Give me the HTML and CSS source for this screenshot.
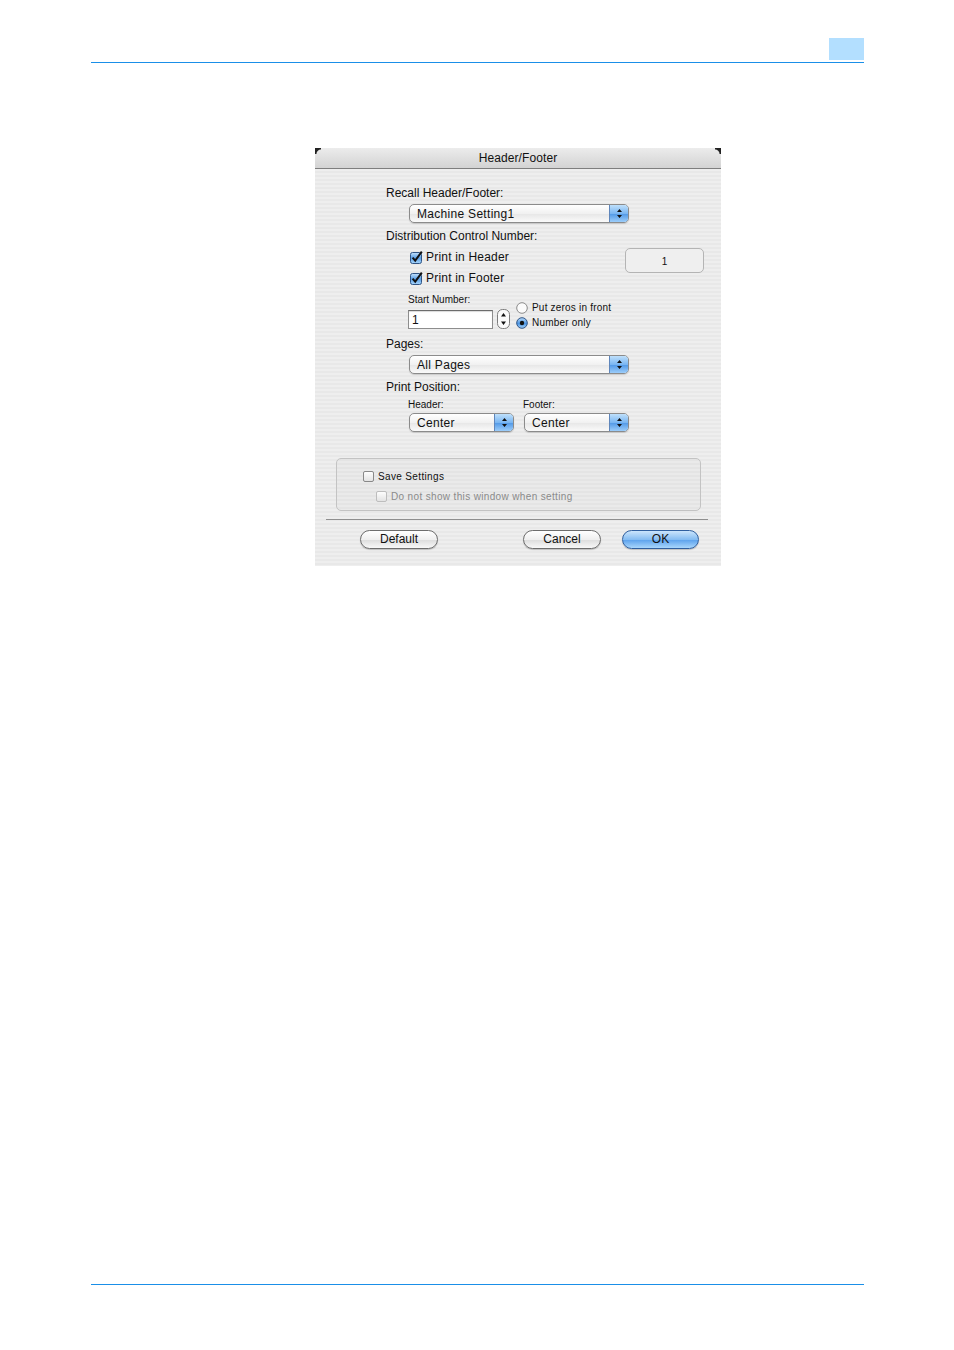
FILE: index.html
```html
<!DOCTYPE html>
<html lang="en">
<head>
    <meta charset="UTF-8">
    <meta name="viewport" content="width=device-width, initial-scale=1.0">
    <title>Header/Footer</title>
    <link rel="stylesheet" href="styles.css">
</head>
<body>
    <div class="page-top">
        <div class="tab-mark"></div>
    </div>

    <div class="dialog">
        <div class="title-bar">Header/Footer</div>

        <div class="dialog-body">
            <div class="form">
                <div class="label">Recall Header/Footer:</div>
                <div class="popup wide first">
                    <span class="popup-text">Machine Setting1</span>
                    <span class="popup-arrows">
                        <svg width="7" height="11" viewBox="0 0 7 11"><path d="M3.5 1 L6 4 L1 4 Z M1 7 L6 7 L3.5 10 Z" fill="#111"/></svg>
                    </span>
                </div>

                <div class="label">Distribution Control Number:</div>
                <div class="dist-row">
                    <div class="checks">
                        <div class="check-row">
                            <svg class="checkbox" width="13" height="13" viewBox="0 0 13 13"><defs><linearGradient id="cb1" x1="0" y1="0" x2="0" y2="1"><stop offset="0" stop-color="#c6e2fb"/><stop offset="0.5" stop-color="#5a9fe6"/><stop offset="1" stop-color="#a9d6fc"/></linearGradient></defs><rect x="0.5" y="1.5" width="11" height="11" rx="2" fill="url(#cb1)" stroke="#2f5485"/><path d="M2.6 6.6 L5.2 9.6 L11.8 0.6" fill="none" stroke="#111" stroke-width="2"/></svg>
                            <span>Print in Header</span>
                        </div>
                        <div class="check-row">
                            <svg class="checkbox" width="13" height="13" viewBox="0 0 13 13"><defs><linearGradient id="cb2" x1="0" y1="0" x2="0" y2="1"><stop offset="0" stop-color="#c6e2fb"/><stop offset="0.5" stop-color="#5a9fe6"/><stop offset="1" stop-color="#a9d6fc"/></linearGradient></defs><rect x="0.5" y="1.5" width="11" height="11" rx="2" fill="url(#cb2)" stroke="#2f5485"/><path d="M2.6 6.6 L5.2 9.6 L11.8 0.6" fill="none" stroke="#111" stroke-width="2"/></svg>
                            <span>Print in Footer</span>
                        </div>
                    </div>
                    <div class="number-box">1</div>
                </div>

                <div class="start-row">
                    <div class="start-col">
                        <div class="small-label">Start Number:</div>
                        <div class="input-row">
                            <div class="text-input">1</div>
                            <svg class="stepper" width="13" height="20" viewBox="0 0 13 20"><rect x="0.5" y="0.5" width="12" height="19" rx="5" fill="#fafafa" stroke="#7d7d7d"/><path d="M6.5 4 L9 7.5 L4 7.5 Z M4 12.5 L9 12.5 L6.5 16 Z" fill="#111"/></svg>
                        </div>
                    </div>
                    <div class="radios">
                        <div class="radio-row">
                            <svg class="radio" width="12" height="12" viewBox="0 0 12 12"><circle cx="6" cy="6" r="5.3" fill="#fbfbfb" stroke="#8a8a8a"/></svg>
                            <span>Put zeros in front</span>
                        </div>
                        <div class="radio-row">
                            <svg class="radio" width="12" height="12" viewBox="0 0 12 12"><defs><linearGradient id="rb" x1="0" y1="0" x2="0" y2="1"><stop offset="0" stop-color="#b9dcfb"/><stop offset="0.55" stop-color="#4d96e4"/><stop offset="1" stop-color="#a6d4fc"/></linearGradient></defs><circle cx="6" cy="6" r="5.3" fill="url(#rb)" stroke="#2f5485"/><circle cx="6" cy="6" r="2.2" fill="#111"/></svg>
                            <span>Number only</span>
                        </div>
                    </div>
                </div>

                <div class="label pages">Pages:</div>
                <div class="popup wide">
                    <span class="popup-text">All Pages</span>
                    <span class="popup-arrows">
                        <svg width="7" height="11" viewBox="0 0 7 11"><path d="M3.5 1 L6 4 L1 4 Z M1 7 L6 7 L3.5 10 Z" fill="#111"/></svg>
                    </span>
                </div>

                <div class="label">Print Position:</div>
                <div class="position-row">
                    <div class="position-col">
                        <div class="small-label">Header:</div>
                        <div class="popup narrow">
                            <span class="popup-text">Center</span>
                            <span class="popup-arrows">
                                <svg width="7" height="11" viewBox="0 0 7 11"><path d="M3.5 1 L6 4 L1 4 Z M1 7 L6 7 L3.5 10 Z" fill="#111"/></svg>
                            </span>
                        </div>
                    </div>
                    <div class="position-col">
                        <div class="small-label">Footer:</div>
                        <div class="popup narrow">
                            <span class="popup-text">Center</span>
                            <span class="popup-arrows">
                                <svg width="7" height="11" viewBox="0 0 7 11"><path d="M3.5 1 L6 4 L1 4 Z M1 7 L6 7 L3.5 10 Z" fill="#111"/></svg>
                            </span>
                        </div>
                    </div>
                </div>
            </div>

            <div class="group-box">
                <div class="group-row">
                    <span class="box"></span>
                    <span>Save Settings</span>
                </div>
                <div class="group-row sub disabled">
                    <span class="box"></span>
                    <span>Do not show this window when setting</span>
                </div>
            </div>

            <div class="separator"></div>

            <div class="buttons">
                <button class="btn">Default</button>
                <div class="btn-right">
                    <button class="btn">Cancel</button>
                    <button class="btn primary">OK</button>
                </div>
            </div>
        </div>
    </div>

    <div class="page-bottom"></div>
</body>
</html>
```

FILE: styles.css
```css
html, body {
    margin: 0;
    padding: 0;
}
body {
    background: #fff;
    font-family: "Liberation Sans", Arial, sans-serif;
    color: #111;
    height: 1350px;
    display: flex;
    flex-direction: column;
}

/* page rules */
.page-top {
    margin: 0 90px 0 91px;
    padding-top: 38px;
    height: 24px;
    border-bottom: 1px solid #1a8fe8;
    display: flex;
    justify-content: flex-end;
}
.tab-mark {
    width: 35px;
    height: 22px;
    background: #b3dfff;
}
.page-bottom {
    margin: auto 90px 0 91px;
    height: 65px;
    border-top: 1px solid #1a8fe8;
}

/* dialog */
.dialog {
    margin: 85px 0 0 315px;
    width: 406px;
    position: relative;
}
.title-bar {
    height: 20px;
    line-height: 20px;
    text-align: center;
    font-size: 12px;
    letter-spacing: 0.1px;
    background: linear-gradient(#ececec, #d3d3d3);
    border-bottom: 1px solid #7e7e7e;
    position: relative;
}
.title-bar::before, .title-bar::after {
    content: "";
    position: absolute;
    top: 0;
    width: 6px;
    height: 6px;
}
.title-bar::before {
    left: 0;
    background: radial-gradient(circle at 100% 100%, transparent 4px, #222 5px);
}
.title-bar::after {
    right: 0;
    background: radial-gradient(circle at 0 100%, transparent 4px, #222 5px);
}
.dialog-body {
    background: repeating-linear-gradient(#eeeeee 0, #eeeeee 2px, #e8e8e8 2px, #e8e8e8 4px);
    padding-bottom: 17px;
}

.form {
    padding: 0 17px 0 71px;
    font-size: 12px;
}
.label {
    height: 16px;
    line-height: 16px;
    margin-top: 5px;
}
.form > .label:first-child {
    margin-top: 0;
    padding-top: 16px;
}
.label.pages {
    margin-top: 7px;
}
.small-label {
    font-size: 10px;
    height: 14px;
    line-height: 14px;
}

/* popup buttons */
.popup {
    height: 17px;
    border: 1px solid #8b8b8b;
    border-radius: 5px;
    background: linear-gradient(#ffffff, #f1f1f1 50%, #e6e6e6 51%, #fafafa);
    display: flex;
    align-items: center;
    margin-top: 3px;
    box-shadow: 0 1px 1px rgba(0, 0, 0, 0.15);
    overflow: hidden;
}
.popup.wide {
    width: 218px;
    margin-left: 23px;
}
.popup.narrow {
    width: 103px;
}
.popup-text {
    flex: 1;
    padding-left: 7px;
    letter-spacing: 0.3px;
}
.popup-arrows {
    width: 18px;
    height: 17px;
    border-left: 1px solid #5f86bb;
    background: linear-gradient(#bfe0fb, #7ab6f2 50%, #4f97e6 51%, #9ccdfa);
    display: flex;
    align-items: center;
    justify-content: center;
}

/* distribution */
.dist-row {
    display: flex;
    justify-content: space-between;
    margin-top: 5px;
}
.checks {
    padding-left: 24px;
    display: flex;
    flex-direction: column;
    gap: 5px;
}
.check-row {
    height: 16px;
    display: flex;
    align-items: center;
    gap: 3px;
    letter-spacing: 0.2px;
}
.checkbox {
    display: block;
}
.number-box {
    width: 77px;
    height: 23px;
    margin-top: -1px;
    border: 1px solid #b4b4b4;
    border-radius: 5px;
    background: #efefef;
    text-align: center;
    line-height: 25px;
    font-size: 10px;
}

.start-row {
    display: flex;
    align-items: flex-end;
    margin-top: 7px;
    padding-left: 22px;
}
.start-col .small-label {
    height: 13px;
    line-height: 13px;
}
.input-row {
    display: flex;
    align-items: center;
    margin-top: 3px;
}
.text-input {
    width: 80px;
    height: 17px;
    border: 1px solid #8d8d8d;
    border-top-color: #6c6c6c;
    background: #fff;
    padding-left: 3px;
    line-height: 18px;
    font-size: 12px;
    box-shadow: inset 0 1px 1px rgba(0, 0, 0, 0.15);
}
.stepper {
    display: block;
    margin-left: 4px;
}
.radios {
    margin-left: 6px;
    margin-bottom: -1px;
    font-size: 10px;
}
.radio-row {
    height: 15px;
    display: flex;
    align-items: center;
    gap: 4px;
    letter-spacing: 0.2px;
}
.radio {
    display: block;
}

.position-row {
    display: flex;
    gap: 10px;
    margin-top: 4px;
    padding-left: 23px;
}
.position-col .small-label {
    height: 12px;
    line-height: 12px;
    margin-left: -1px;
}
.position-col .popup {
    margin-top: 2px;
}

/* bottom group */
.group-box {
    margin: 26px 20px 0 21px;
    height: 51px;
    border: 1px solid #c3c3c3;
    border-radius: 5px;
    background: rgba(0, 0, 0, 0.015);
    font-size: 10px;
}
.group-row {
    display: flex;
    align-items: center;
    gap: 4px;
    height: 16px;
    margin-top: 9px;
    padding-left: 26px;
    letter-spacing: 0.35px;
}
.group-row.sub {
    margin-top: 4px;
    padding-left: 39px;
}
.box {
    width: 9px;
    height: 9px;
    border: 1px solid #888;
    border-radius: 2px;
    background: linear-gradient(#fdfdfd, #e3e3e3);
}
.disabled {
    color: #8a8a8a;
}
.disabled .box {
    border-color: #bdbdbd;
}

.separator {
    margin: 8px 13px 0 11px;
    height: 1px;
    background: #8f8f8f;
}

.buttons {
    display: flex;
    justify-content: space-between;
    margin: 10px 22px 0 45px;
}
.btn-right {
    display: flex;
    gap: 21px;
}
.btn {
    width: 78px;
    height: 19px;
    padding: 0;
    border: 1px solid #6d6d6d;
    border-radius: 10px;
    background: linear-gradient(#ffffff, #efefef 50%, #dcdcdc 51%, #f8f8f8);
    font-family: "Liberation Sans", Arial, sans-serif;
    font-size: 12px;
    color: #111;
    line-height: 17px;
    box-shadow: 0 1px 1px rgba(0, 0, 0, 0.2);
}
.btn.primary {
    width: 77px;
    border-color: #2f5f9f;
    background: linear-gradient(#cbe5fc, #86bdf2 50%, #5aa0ec 51%, #a9d6fc);
}
```
